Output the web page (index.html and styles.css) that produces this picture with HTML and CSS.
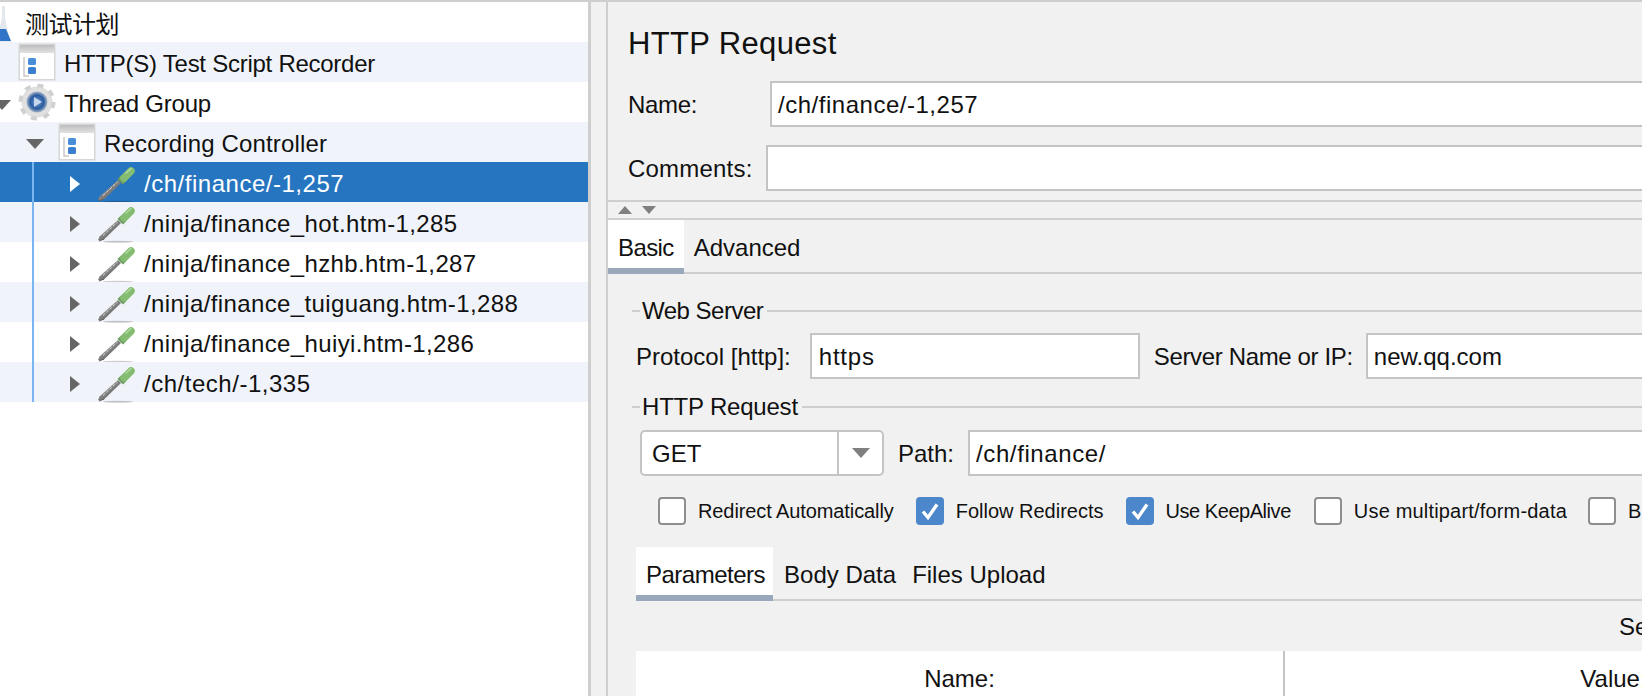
FILE: index.html
```html
<!DOCTYPE html>
<html lang="zh-CN">
<head>
    <meta charset="UTF-8">
    <title>HTTP Request</title>
    <link rel="stylesheet" href="styles.css">
</head>
<body>
    <svg class="defs" width="0" height="0">
        <defs>
            <linearGradient id="metal" x1="0" y1="0" x2="1" y2="1">
                <stop offset="0" stop-color="#c4c4c4"/>
                <stop offset="0.5" stop-color="#808080"/>
                <stop offset="1" stop-color="#505050"/>
            </linearGradient>
            <radialGradient id="ball" cx="0.5" cy="0.5" r="0.5">
                <stop offset="0" stop-color="#6f9bd6"/>
                <stop offset="0.65" stop-color="#2a5a9e"/>
                <stop offset="1" stop-color="#a7b6ca"/>
            </radialGradient>
            <linearGradient id="titlebar" x1="0" y1="0" x2="0" y2="1">
                <stop offset="0" stop-color="#bdbdbd"/>
                <stop offset="1" stop-color="#e2e2e2"/>
            </linearGradient>
            <symbol id="dropper" viewBox="0 0 38 38">
                <ellipse cx="20" cy="36.8" rx="15" ry="1" fill="#000" opacity=".2"/>
                <path d="M0 35 L1.5 31.5 L20 15 L23 18 L5.5 35 Z" fill="url(#metal)"/>
                <path d="M5 30.5 L19.5 17" stroke="#dedede" stroke-width="1" stroke-dasharray="3 1.5"/>
                <path d="M1 36 L6 34" stroke="#666" stroke-width="1.2"/>
                <path d="M19.5 14 L23 10.5 L28.5 16 L25 19.5 Z" fill="#6c9c60"/>
                <path d="M26 13 L33 6" stroke="#84bc72" stroke-width="7.5" stroke-linecap="round"/>
                <path d="M28 8 L33 3.5" stroke="#aedb9f" stroke-width="1.6" stroke-linecap="round"/>
            </symbol>
            <symbol id="win" viewBox="0 0 38 38">
                <rect x="0.5" y="0.5" width="37" height="37" fill="#d6d6d6"/>
                <rect x="2" y="2" width="34" height="34" fill="#fff"/>
                <rect x="2" y="2" width="34" height="8" fill="url(#titlebar)"/>
                <path d="M6 14 V33 H11" fill="none" stroke="#c9c9c9" stroke-width="1.5"/>
                <rect x="10" y="15" width="8" height="7" rx="1.5" fill="#4a8edb"/>
                <rect x="10" y="24" width="8" height="7" rx="1.5" fill="#3a7fd0"/>
            </symbol>
        </defs>
    </svg>

    <div class="app">
        <aside class="tree">
            <div class="row root">
                <svg class="flask" viewBox="0 0 12 40"><path d="M2 4 V16 L0 24 V40 H11 L8 30 L5 16 V4 Z" fill="#e3e8ee"/><path d="M0 27 H6 L11 39 H0 Z" fill="#2f74c6"/></svg>
                <span class="rowtext cjk">测试计划</span>
            </div>
            <div class="row alt lvl1">
                <svg class="icon"><use href="#win"/></svg>
                <span class="rowtext tight">HTTP(S) Test Script Recorder</span>
            </div>
            <div class="row lvl1">
                <span class="arrow-cut"></span>
                <svg class="icon" viewBox="0 0 38 38">
                    <circle cx="19" cy="19" r="15.5" fill="#e0e0e0"/>
                    <circle cx="19" cy="19" r="16.5" fill="none" stroke="#d0d0d0" stroke-width="4" stroke-dasharray="6 6.95"/>
                    <circle cx="19" cy="19" r="10.5" fill="url(#ball)"/>
                    <path d="M16 14 L24 19 L16 24 Z" fill="#c6d6ee"/>
                </svg>
                <span class="rowtext tighter">Thread Group</span>
            </div>
            <div class="row alt lvl2">
                <span class="arrow-down"></span>
                <svg class="icon"><use href="#win"/></svg>
                <span class="rowtext loose">Recording Controller</span>
            </div>
            <div class="group">
                <div class="row leaf selected">
                    <span class="arrow-right"></span>
                    <svg class="icon dropper"><use href="#dropper"/></svg>
                    <span class="rowtext path-short">/ch/finance/-1,257</span>
                </div>
                <div class="row leaf alt">
                    <span class="arrow-right"></span>
                    <svg class="icon dropper"><use href="#dropper"/></svg>
                    <span class="rowtext path-long">/ninja/finance_hot.htm-1,285</span>
                </div>
                <div class="row leaf">
                    <span class="arrow-right"></span>
                    <svg class="icon dropper"><use href="#dropper"/></svg>
                    <span class="rowtext path-long">/ninja/finance_hzhb.htm-1,287</span>
                </div>
                <div class="row leaf alt">
                    <span class="arrow-right"></span>
                    <svg class="icon dropper"><use href="#dropper"/></svg>
                    <span class="rowtext path-long">/ninja/finance_tuiguang.htm-1,288</span>
                </div>
                <div class="row leaf">
                    <span class="arrow-right"></span>
                    <svg class="icon dropper"><use href="#dropper"/></svg>
                    <span class="rowtext path-long">/ninja/finance_huiyi.htm-1,286</span>
                </div>
                <div class="row leaf alt">
                    <span class="arrow-right"></span>
                    <svg class="icon dropper"><use href="#dropper"/></svg>
                    <span class="rowtext path-short">/ch/tech/-1,335</span>
                </div>
            </div>
        </aside>

        <div class="splitter"></div>

        <main class="panel">
            <h1 class="title">HTTP Request</h1>
            <div class="field name-row">
                <label class="lbl name-lbl">Name:</label>
                <div class="input path-short">/ch/finance/-1,257</div>
            </div>
            <div class="field comments-row">
                <label class="lbl comments-lbl">Comments:</label>
                <div class="input"></div>
            </div>
            <div class="collapser">
                <span class="tri-up"></span>
                <span class="tri-down"></span>
            </div>

            <div class="tabs">
                <span class="tab active basic-tab">Basic</span>
                <span class="tab">Advanced</span>
            </div>

            <div class="basic">
                <div class="legend web-legend"><span>Web Server</span></div>
                <div class="field server-row">
                    <label class="lbl">Protocol [http]:</label>
                    <div class="input protocol">https</div>
                    <label class="lbl server-lbl">Server Name or IP:</label>
                    <div class="input">new.qq.com</div>
                </div>
                <div class="legend req-legend"><span>HTTP Request</span></div>
                <div class="field path-row">
                    <div class="select">
                        <span class="select-val">GET</span>
                        <span class="select-btn"><i class="tri-down big"></i></span>
                    </div>
                    <label class="lbl path-lbl">Path:</label>
                    <div class="input path-value">/ch/finance/</div>
                </div>
                <div class="checks">
                    <span class="check check-first"><i class="box"></i>Redirect Automatically</span>
                    <span class="check"><i class="box on"><svg viewBox="0 0 28 28"><path d="M7 14.5 L12 20.5 L21 7.5" fill="none" stroke="#fff" stroke-width="3.4"/></svg></i>Follow Redirects</span>
                    <span class="check check-keep"><i class="box on"><svg viewBox="0 0 28 28"><path d="M7 14.5 L12 20.5 L21 7.5" fill="none" stroke="#fff" stroke-width="3.4"/></svg></i>Use KeepAlive</span>
                    <span class="check check-multi"><i class="box"></i>Use multipart/form-data</span>
                    <span class="check"><i class="box"></i>Browser-compatible headers</span>
                </div>

                <div class="tabs sub-tabs">
                    <span class="tab active params-tab">Parameters</span>
                    <span class="tab sub-tab">Body Data</span>
                    <span class="tab sub-tab">Files Upload</span>
                </div>
                <div class="send-title">Send Parameters With the Request:</div>
                <div class="table">
                    <div class="th">Name:</div>
                    <div class="th">Value:</div>
                </div>
            </div>
        </main>
    </div>
</body>
</html>
```

FILE: styles.css
```css
html, body{
    margin: 0;
    padding: 0;
    height: 100%;
    overflow: hidden;
}
body{
    font-family: "Liberation Sans", "Noto Sans CJK SC", sans-serif;
    font-size: 24px;
    color: #111;
    background-color: #f1f1f1;
}
.defs{
    display: block;
    height: 0;
}
.app{
    display: flex;
    width: 2000px;
    height: 696px;
    border-top: 2px solid #cfcfcf;
    box-sizing: border-box;
}

/* arbol */
.tree{
    width: 588px;
    background-color: #fff;
    overflow: hidden;
    flex-shrink: 0;
}
.row{
    display: flex;
    align-items: center;
    height: 40px;
    box-sizing: border-box;
    white-space: nowrap;
    position: relative;
}
.alt{
    background-color: #f0f4fa;
}
.lvl1{
    padding-left: 18px;
}
.lvl2{
    padding-left: 26px;
}
.leaf{
    padding-left: 70px;
}
.selected{
    background-color: #2675c0;
    color: #fff;
}
.icon{
    width: 38px;
    height: 38px;
    flex-shrink: 0;
    filter: blur(.4px);
}
.dropper{
    margin-top: 3px;
}
.rowtext{
    margin-left: 8px;
    padding-top: 4px;
}
.tight{
    letter-spacing: -.26px;
}
.tighter{
    letter-spacing: -.2px;
}
.loose{
    letter-spacing: .15px;
}
.path-long{
    letter-spacing: .38px;
}
.path-short{
    letter-spacing: .52px;
}
.flask{
    width: 12px;
    height: 40px;
    flex-shrink: 0;
    filter: blur(.5px);
}
.flask + .rowtext{
    margin-left: 13px;
    padding-top: 0;
}
.cjk{
    letter-spacing: -.5px;
}
.group{
    position: relative;
}
.group::before{
    content: "";
    position: absolute;
    left: 32px;
    top: 0;
    bottom: 0;
    width: 2px;
    background-color: #7ab6f2;
    z-index: 1;
}
.arrow-right{
    width: 0;
    height: 0;
    border-top: 8px solid transparent;
    border-bottom: 8px solid transparent;
    border-left: 10px solid #666;
    margin-right: 18px;
    margin-top: 4px;
}
.selected .arrow-right{
    border-left-color: #fff;
}
.arrow-down{
    width: 0;
    height: 0;
    border-left: 9px solid transparent;
    border-right: 9px solid transparent;
    border-top: 10px solid #666;
    margin-right: 14px;
    margin-top: 4px;
}
.arrow-cut{
    position: absolute;
    left: -7px;
    top: 18px;
    border-left: 9px solid transparent;
    border-right: 9px solid transparent;
    border-top: 10px solid #666;
}

.splitter{
    width: 20px;
    flex-shrink: 0;
    box-sizing: border-box;
    border-left: 3px solid #cfcfcf;
    border-right: 2px solid #cfcfcf;
}

/* panel derecho */
.panel{
    flex: 1;
    min-width: 0;
}
.title{
    font-size: 31px;
    font-weight: normal;
    letter-spacing: .35px;
    margin: 0;
    padding: 24px 0 0 20px;
    line-height: 36px;
}
.field{
    display: flex;
    align-items: center;
}
.lbl{
    white-space: nowrap;
    flex-shrink: 0;
    padding-top: 2px;
}
.input{
    flex: 1;
    height: 46px;
    box-sizing: border-box;
    background-color: #fff;
    border: 2px solid #c4c4c4;
    padding: 0 6px;
    line-height: 43px;
    white-space: nowrap;
}
.name-row{
    margin-top: 19px;
    padding-left: 20px;
}
.name-lbl{
    width: 142px;
    letter-spacing: -.3px;
}
.comments-row{
    margin-top: 18px;
    padding-left: 20px;
}
.comments-lbl{
    width: 138px;
    letter-spacing: .2px;
}
.collapser{
    margin-top: 9px;
    height: 16px;
    border-top: 2px solid #cfcfcf;
    border-bottom: 2px solid #cfcfcf;
    display: flex;
    align-items: center;
    padding-left: 10px;
    gap: 10px;
}
.tri-up{
    border-left: 7px solid transparent;
    border-right: 7px solid transparent;
    border-bottom: 8px solid #808080;
}
.tri-down{
    border-left: 7px solid transparent;
    border-right: 7px solid transparent;
    border-top: 8px solid #808080;
}
.tabs{
    display: flex;
    border-bottom: 2px solid #cfcfcf;
}
.tab{
    padding: 0 10px;
    height: 54px;
    line-height: 56px;
    box-sizing: border-box;
    margin-bottom: -2px;
    border-bottom: 6px solid transparent;
    white-space: nowrap;
}
.tab.active{
    background-color: #fff;
    border-bottom-color: #9aa8bc;
}
.basic-tab{
    letter-spacing: -.6px;
}
.params-tab{
    letter-spacing: -.5px;
    padding-right: 8px;
    margin-right: 3px;
}
.sub-tab{
    padding: 0 8px;
}
.basic{
    padding: 23px 0 0 28px;
}
.legend{
    display: flex;
    align-items: center;
    height: 28px;
    white-space: nowrap;
}
.legend span{
    padding: 0 4px 0 0;
}
.web-legend span{
    letter-spacing: -.5px;
}
.req-legend span{
    letter-spacing: -.2px;
}
.legend::before{
    content: "";
    width: 8px;
    height: 2px;
    background-color: #cfcfcf;
    margin-left: -4px;
    margin-right: 2px;
}
.legend::after{
    content: "";
    flex: 1;
    height: 2px;
    background-color: #cfcfcf;
}
.server-row{
    margin-top: 8px;
}
.protocol{
    flex: 0 0 330px;
    margin-left: 19px;
    padding-left: 7px;
    letter-spacing: .8px;
}
.server-lbl{
    margin-left: 14px;
    margin-right: 13px;
    letter-spacing: -.35px;
}
.req-legend{
    margin-top: 14px;
}
.path-row{
    margin-top: 9px;
    padding-left: 4px;
}
.path-value{
    letter-spacing: .6px;
}
.select{
    display: flex;
    width: 244px;
    height: 46px;
    box-sizing: border-box;
    border: 2px solid #c4c4c4;
    border-radius: 5px;
    background-color: #fff;
    flex-shrink: 0;
}
.select-val{
    flex: 1;
    padding-left: 10px;
    line-height: 43px;
}
.select-btn{
    width: 43px;
    border-left: 2px solid #c4c4c4;
    display: flex;
    align-items: center;
    justify-content: center;
}
.tri-down.big{
    border-left-width: 9px;
    border-right-width: 9px;
    border-top-width: 10px;
}
.path-lbl{
    margin-left: 14px;
    margin-right: 14px;
}
.checks{
    display: flex;
    margin-top: 21px;
    padding-left: 22px;
    font-size: 20px;
    white-space: nowrap;
}
.check{
    display: flex;
    align-items: center;
    margin-right: 22px;
}
.check-first{
    letter-spacing: -.1px;
}
.check-keep{
    letter-spacing: -.45px;
    margin-right: 23px;
}
.check-multi{
    letter-spacing: .18px;
    margin-right: 21px;
}
.box{
    display: block;
    width: 28px;
    height: 28px;
    box-sizing: border-box;
    border: 2px solid #8e8e8e;
    border-radius: 4px;
    background-color: #fff;
    margin-right: 12px;
}
.box.on{
    background-color: #4c86cb;
    border: 0;
}
.box svg{
    display: block;
}
.sub-tabs{
    margin-top: 22px;
}
.send-title{
    padding-left: 983px;
    margin-top: 12px;
    line-height: 28px;
    white-space: nowrap;
}
.table{
    display: grid;
    grid-template-columns: 649px 657px;
    margin-top: 10px;
    height: 60px;
    background-color: #fff;
    width: 1500px;
}
.th{
    text-align: center;
    line-height: 56px;
    height: 60px;
    box-sizing: border-box;
}
.th:first-child{
    border-right: 2px solid #c4c4c4;
}
```
